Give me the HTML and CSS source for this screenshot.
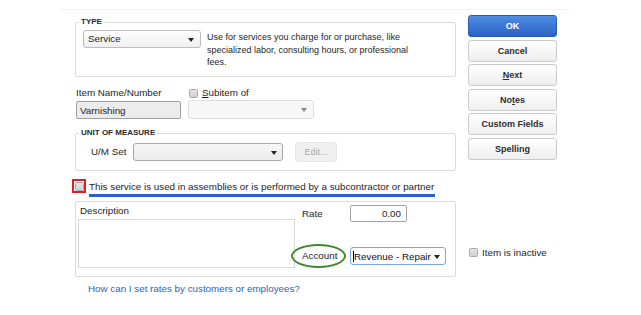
FILE: index.html
```html
<!DOCTYPE html>
<html>
<head>
<meta charset="utf-8">
<link rel="stylesheet" href="styles.css">
</head>
<body>
<div class="dialog">
  <div class="main">
    <div class="group type-group">
      <span class="legend">TYPE</span>
      <div class="select sel-type"><span>Service</span><i class="arrow"></i></div>
      <p class="type-desc">Use for services you charge for or purchase, like specialized labor, consulting hours, or professional fees.</p>
    </div>

    <div class="item-grid">
      <label class="lbl">Item Name/Number</label>
      <label class="lbl chk-lbl"><span class="chk"></span><span><u>S</u>ubitem of</span></label>
      <div class="input input-gray">Varnishing</div>
      <div class="select sel-disabled"><span></span><i class="arrow arrow-gray"></i></div>
    </div>

    <div class="group uom-group">
      <span class="legend">UNIT OF MEASURE</span>
      <label class="lbl uom-lbl">U/M Set</label>
      <div class="select sel-uom"><span></span><i class="arrow"></i></div>
      <button class="btn btn-disabled edit-btn">Edit...</button>
    </div>

    <div class="assembly-row">
      <span class="red-box"><span class="chk"></span></span>
      <span class="assembly-text">This service is used in assemblies or is performed by a subcontractor or partner</span>
    </div>

    <div class="group rate-group">
      <div class="desc-col">
        <label class="lbl">Description</label>
        <div class="textarea"></div>
      </div>
      <div class="rate-col">
        <label class="lbl">Rate</label>
        <div class="input rate-input">0.00</div>
        <label class="lbl account-lbl">Account<span class="ellipse"></span></label>
        <div class="select sel-account"><span><span class="caret"></span>Revenue - Repair</span><i class="arrow"></i></div>
      </div>
    </div>

    <a class="help-link" href="#">How can I set rates by customers or employees?</a>
  </div>

  <div class="side">
    <button class="btn btn-primary">OK</button>
    <button class="btn">Cancel</button>
    <button class="btn"><u>N</u>ext</button>
    <button class="btn">No<u>t</u>es</button>
    <button class="btn">Custom Fields</button>
    <button class="btn">Spellin<u>g</u></button>
    <label class="lbl chk-lbl inactive"><span class="chk"></span><span>Item is inactive</span></label>
  </div>
</div>
</body>
</html>
```

FILE: styles.css
```css
* { box-sizing: border-box; }
html, body { margin: 0; padding: 0; background: #fff; }
body {
  font-family: "Liberation Sans", Arial, sans-serif;
  font-size: 9.8px;
  color: #1e1e1e;
  width: 641px;
  height: 315px;
  overflow: hidden;
}
.dialog {
  margin: 9px 0 0 60px;
  width: 510px;
  border-top: 1px solid #f2f2f2;
  display: flex;
  padding-left: 15px;
}
.main { width: 381px; display: flex; flex-direction: column; }
.side { width: 89px; margin-left: 12px; padding-top: 5px; display: flex; flex-direction: column; }

.group {
  position: relative;
  border: 1px solid #dcdcdc;
  border-radius: 2px;
}
.legend {
  position: absolute;
  top: -6px;
  left: 3px;
  padding: 0 2px;
  background: #fff;
  font-size: 8px;
  line-height: 10px;
  font-weight: bold;
  color: #2a2a2a;
}

.type-group {
  margin-top: 12px;
  height: 55px;
  display: flex;
  align-items: flex-start;
  padding: 7px 7px;
}
.select {
  position: relative;
  height: 18px;
  border: 1px solid #bcbcbc;
  border-radius: 3px;
  background: linear-gradient(#fdfdfd, #f0f0f0);
  display: flex;
  align-items: center;
  padding-left: 4px;
  line-height: 1;
}
.arrow {
  position: absolute;
  right: 6px;
  top: 7px;
  width: 0; height: 0;
  border-left: 3.5px solid transparent;
  border-right: 3.5px solid transparent;
  border-top: 4px solid #222;
}
.arrow-gray { border-top-color: #8a8a8a; }
.sel-type { width: 118px; flex: none; }
.type-desc {
  margin: 1px 0 0 6px;
  font-size: 9px;
  line-height: 12.5px;
  width: 222px;
}

.item-grid {
  display: grid;
  grid-template-columns: 105px 126px;
  grid-template-rows: 10px 18px;
  column-gap: 7px;
  row-gap: 3px;
  margin-top: 11px;
  padding-left: 1px;
}
.lbl { display: block; line-height: 10px; }
.chk-lbl { display: flex; align-items: center; gap: 4px; }
.chk {
  display: inline-block;
  width: 9px; height: 9px;
  border: 1px solid #a8a8a8;
  border-radius: 1.5px;
  background: linear-gradient(#e4e4e4, #d2d2d2);
  flex: none;
}
.item-grid .chk-lbl { margin-left: 1px; }
.input {
  height: 18px;
  border: 1px solid #a8a8a8;
  border-radius: 2px;
  padding-left: 3px;
  display: flex;
  align-items: center;
  background: #fff;
}
.input-gray { background: #ececec; border-color: #9f9f9f; }
.sel-disabled { height: 19px; margin-top: -1px; border-color: #dedede; background: #f7f7f7; }

.uom-group {
  margin-top: 14px;
  height: 38px;
  display: flex;
  align-items: center;
  padding-left: 15px;
}
.uom-lbl { width: 42px; }
.sel-uom { width: 150px; border-color: #a9a9a9; background: linear-gradient(#f6f6f6, #ececec); }
.sel-uom .arrow { right: 5px; }

.btn {
  height: 22px;
  width: 89px;
  margin-bottom: 2.6px;
  border: 1px solid #cacaca;
  border-radius: 3px;
  background: linear-gradient(#ffffff, #eeeeee);
  font-family: "Liberation Sans", Arial, sans-serif;
  font-size: 9px;
  font-weight: bold;
  color: #2e2e2e;
  padding: 0;
}
.btn-primary {
  background: linear-gradient(#4f8de2, #2b62c6);
  border-color: #2a5cb6;
  color: #fff;
}
.btn.btn-disabled {
  font-weight: normal;
  color: #a8a8a8;
  border-color: #e6e6e6;
  background: #f0f0f0;
}
.btn.edit-btn { width: 42px; height: 20px; margin: 0 0 0 12px; }

.assembly-row {
  margin-top: 8px;
  margin-left: -3px;
  display: flex;
  align-items: flex-start;
}
.red-box {
  width: 14px; height: 14px;
  border: 2px solid #e02020;
  display: flex;
  align-items: center;
  justify-content: center;
  flex: none;
}
.assembly-text {
  margin-left: 3px;
  margin-top: 2px;
  line-height: 11px;
  padding-bottom: 2px;
  border-bottom: 3px solid #2c60c2;
  padding-right: 1px;
}

.rate-group {
  margin-top: 4px;
  height: 76px;
  display: flex;
  padding: 3px 0 0 2px;
}
.desc-col { width: 217px; }
.desc-col .lbl { margin: 1px 0 0 2px; }
.textarea {
  margin-top: 3px;
  height: 49px;
  border: 1px solid #d8d8d8;
  background: #fff;
}
.rate-col {
  margin-left: 7px;
  display: grid;
  grid-template-columns: 48px 57px;
  grid-template-rows: 17px 20px;
  row-gap: 24px;
  align-items: center;
}
.rate-input {
  height: 17px;
  justify-content: flex-end;
  padding-right: 5px;
  border-color: #a4a4a4;
}
.account-lbl { position: relative; }
.ellipse {
  position: absolute;
  left: -11px;
  top: -7px;
  width: 55px;
  height: 24px;
  border: 2px solid #3f8a2a;
  border-radius: 50%;
}
.sel-account {
  width: 96px;
  border-color: #7ea6e4;
  background: #fff;
  padding-left: 2px;
  font-size: 9.8px;
  color: #111;
}
.sel-account .arrow { right: 5px; }
.caret { display: inline-block; width: 1px; height: 11px; background: #000; vertical-align: -2px; }

.help-link {
  margin: 7px 0 0 13px;
  color: #2f5fb6;
  text-decoration: none;
  line-height: 10px;
}

.inactive { margin-top: 85px; margin-left: 1px; gap: 4px; }
```
